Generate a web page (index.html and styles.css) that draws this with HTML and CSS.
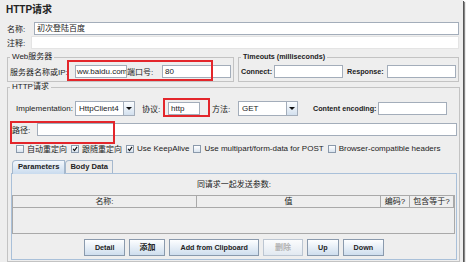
FILE: index.html
```html
<!DOCTYPE html>
<html lang="zh">
  <head>
    <meta charset="UTF-8" />
    <title>HTTP请求</title>
    <link rel="stylesheet" href="styles.css">
  </head>
  <body>
    <div class="window">
      <h1 class="title">HTTP请求</h1>

      <div class="row name-row">
        <label>名称:</label>
        <div class="field grow">初次登陆百度</div>
      </div>
      <div class="row comment-row">
        <label>注释:</label>
        <div class="textarea grow"></div>
      </div>

      <div class="server-row">
        <fieldset class="group web">
          <legend>Web服务器</legend>
          <div class="row">
            <label class="host-label">服务器名称或IP:</label>
            <div class="field host">ww.baidu.com</div>
            <label class="port-label">端口号:</label>
            <div class="field port">80</div>
          </div>
        </fieldset>
        <fieldset class="group timeouts">
          <legend class="bold">Timeouts (milliseconds)</legend>
          <div class="row">
            <label class="bold connect-label">Connect:</label>
            <div class="field t-field"></div>
            <label class="bold response-label">Response:</label>
            <div class="field t-field"></div>
          </div>
        </fieldset>
      </div>

      <fieldset class="group http">
        <legend>HTTP请求</legend>
        <div class="row impl-row">
          <label class="impl-label">Implementation:</label>
          <div class="combo"><span class="combo-text">HttpClient4</span><span class="combo-btn"></span></div>
          <label class="proto-label">协议:</label>
          <div class="field proto">http</div>
          <label class="method-label">方法:</label>
          <div class="combo"><span class="combo-text">GET</span><span class="combo-btn"></span></div>
          <label class="bold enc-label">Content encoding:</label>
          <div class="field enc"></div>
        </div>
        <div class="row path-row">
          <label class="path-label">路径:</label>
          <div class="field grow"></div>
        </div>
        <div class="row check-row">
          <span class="check"><span class="box"></span>自动重定向</span>
          <span class="check"><span class="box"><svg viewBox="0 0 8 8"><path d="M1.5 3.8 L3.3 6 L6.8 1.2" /></svg></span>跟随重定向</span>
          <span class="check"><span class="box"><svg viewBox="0 0 8 8"><path d="M1.5 3.8 L3.3 6 L6.8 1.2" /></svg></span>Use KeepAlive</span>
          <span class="check"><span class="box"></span>Use multipart/form-data for POST</span>
          <span class="check"><span class="box"></span>Browser-compatible headers</span>
        </div>

        <div class="tabs">
          <span class="tab active">Parameters</span>
          <span class="tab">Body Data</span>
        </div>
        <div class="panel">
          <div class="panel-caption">同请求一起发送参数:</div>
          <div class="table">
            <div class="table-head">
              <span class="col-name">名称:</span>
              <span class="col-value">值</span>
              <span class="col-enc">编码?</span>
              <span class="col-eq">包含等于?</span>
            </div>
          </div>
          <div class="buttons">
            <span class="btn">Detail</span>
            <span class="btn zh">添加</span>
            <span class="btn">Add from Clipboard</span>
            <span class="btn zh disabled">删除</span>
            <span class="btn">Up</span>
            <span class="btn">Down</span>
          </div>
        </div>
      </fieldset>

      <div class="mark mark-host"></div>
      <div class="mark mark-proto"></div>
      <div class="mark mark-path"></div>
    </div>
  </body>
</html>
```

FILE: styles.css
```css
* {
  box-sizing: border-box;
}
body {
  margin: 0;
  background: #fff;
  font-family: "Liberation Sans", "Noto Sans CJK SC", Arial, sans-serif;
  font-size: 8px;
  color: #222;
}
.window {
  position: relative;
  width: 463px;
  height: 262px;
  padding: 1px 3px 0 7px;
  background: #eeeeee;
  box-shadow: 1px 1px 0 #555, 2px 2px 1px #888;
}
.title {
  margin: 0 0 3px -1px;
  height: 18px;
  line-height: 18px;
  font-size: 10px;
  font-weight: bold;
}
.bold {
  font-weight: bold;
  font-size: 7.2px;
}
.row {
  display: flex;
  align-items: center;
}
.grow {
  flex: 1;
}
label {
  white-space: nowrap;
}

/* text fields */
.field {
  height: 13px;
  line-height: 11px;
  padding: 0 2px;
  background: #fff;
  border: 1px solid #a3adba;
  white-space: nowrap;
  overflow: hidden;
}
.textarea {
  height: 13px;
  background: #fff;
  border: 1px solid #e4e4e4;
}
.name-row,
.comment-row {
  width: 452px;
  height: 13px;
}
.name-row {
  margin-bottom: 1px;
}
.name-row label {
  width: 27px;
}
.comment-row label {
  width: 24px;
}

/* groups */
.server-row {
  display: flex;
  gap: 4px;
  width: 452px;
  margin-top: 3px;
}
.group {
  margin: 0;
  min-width: 0;
  border: 1px solid #c3c3c3;
}
.group legend {
  padding: 0 2px;
  height: 10px;
  line-height: 10px;
}
.web {
  width: 227px;
  padding: 3px 2px;
}
.timeouts {
  width: 221px;
  padding: 3px 2px;
}
.host-label {
  width: 65px;
}
.host {
  width: 52px;
  padding: 0 1px;
}
.port-label {
  width: 35px;
}
.port {
  width: 69px;
}
.connect-label {
  width: 33px;
}
.t-field {
  width: 69px;
}
.response-label {
  width: 44px;
  padding-left: 4px;
}

/* http group */
.http {
  width: 453px;
  padding: 0 2px 1px 2px;
}
.impl-row {
  height: 15px;
  margin: 9px 0 0 6px;
}
.impl-label {
  width: 59px;
}
.combo {
  display: flex;
  width: 60px;
  height: 15px;
  background: #fff;
  border: 1px solid #a3adba;
}
.combo-text {
  flex: 1;
  padding-left: 3px;
  line-height: 13px;
}
.combo-btn {
  width: 11px;
  display: flex;
  align-items: center;
  justify-content: center;
  border-left: 1px solid #a3adba;
  background: linear-gradient(#fbfdff, #d3e0ee);
}
.combo-btn::after {
  content: "";
  border-left: 3px solid transparent;
  border-right: 3px solid transparent;
  border-top: 3px solid #111;
}
.proto-label {
  width: 26px;
  margin-left: 7px;
}
.proto {
  width: 32px;
}
.method-label {
  width: 26px;
  margin-left: 12px;
}
.enc-label {
  width: 65px;
  margin-left: 15px;
}
.enc {
  width: 69px;
}
.path-row {
  height: 13px;
  margin: 7px 0 0 2px;
}
.path-label {
  width: 25px;
}

/* checkboxes */
.check-row {
  height: 11px;
  margin: 7px 0 0 6px;
  gap: 4px;
}
.check {
  display: flex;
  align-items: center;
  gap: 3px;
  white-space: nowrap;
}
.box {
  width: 8px;
  height: 8px;
  border: 1px solid #8a99ab;
  background: linear-gradient(#fff, #d9e4ef);
}
.box svg {
  display: block;
  width: 6px;
  height: 6px;
  fill: none;
  stroke: #111;
  stroke-width: 1.5;
}

/* tabs */
.tabs {
  display: flex;
  height: 13px;
  margin: 6px 0 0 2px;
}
.tab {
  height: 13px;
  padding: 0 4px;
  line-height: 12px;
  font-size: 7.6px;
  font-weight: bold;
  border: 1px solid #a5b8cd;
  border-bottom: none;
  border-top-left-radius: 4px;
  background: #ececec;
}
.tab.active {
  position: relative;
  z-index: 1;
  height: 14px;
  padding: 0 5px;
  background: linear-gradient(#f3f7fc, #c9dbee);
}
.panel {
  height: 87px;
  margin-left: 1px;
  border: 1px solid #a9c0d9;
  display: flex;
  flex-direction: column;
}
.panel-caption {
  height: 21px;
  line-height: 21px;
  text-align: center;
}
.table {
  height: 39px;
  margin-right: 1px;
  border: 1px solid #a9a9a9;
}
.table-head {
  display: flex;
  height: 12px;
  border-bottom: 1px solid #a9a9a9;
}
.table-head span {
  border-right: 1px solid #a9a9a9;
  line-height: 11px;
  text-align: center;
}
.col-name,
.col-value {
  width: 184px;
}
.col-enc {
  width: 29px;
}
.col-eq {
  flex: 1;
}
.buttons {
  display: flex;
  justify-content: center;
  gap: 4px;
  margin-top: 5px;
}
.btn {
  height: 17px;
  padding: 0 10px;
  line-height: 15px;
  font-size: 7.2px;
  font-weight: bold;
  border: 1px solid #8a9aad;
  background: linear-gradient(#fdfeff, #cfdeee);
}
.btn.zh {
  padding: 0 9px;
  font-size: 8px;
}
.btn.disabled {
  padding: 0 11px;
  color: #b0b0b0;
  border-color: #bcc6d2;
  background: linear-gradient(#fbfcfd, #e2e9f1);
}

/* red annotation boxes */
.mark {
  position: absolute;
  border: 2px solid #e3262b;
}
.mark-host {
  left: 67px;
  top: 60px;
  width: 146px;
  height: 21px;
}
.mark-proto {
  left: 163px;
  top: 98px;
  width: 47px;
  height: 19px;
}
.mark-path {
  left: 10px;
  top: 121px;
  width: 105px;
  height: 23px;
}
```
